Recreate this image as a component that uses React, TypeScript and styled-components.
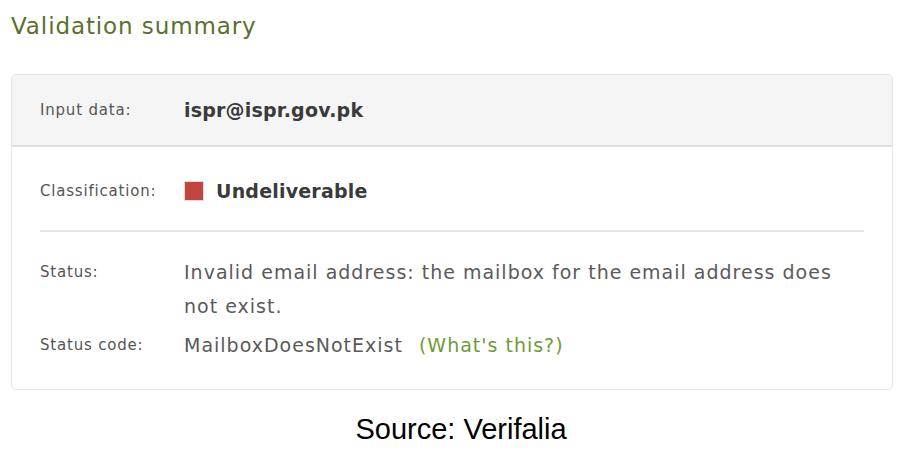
import React from "react";
import styled, { createGlobalStyle } from "styled-components";

const Global = createGlobalStyle`
  html, body { margin: 0; padding: 0; background: #ffffff; }
  body { font-family: "DejaVu Sans", "Inter", sans-serif; }
`;

const Page = styled.div`
  width: 906px;
  height: 470px;
  box-sizing: border-box;
  padding: 8px 13px 0 11px;
  display: flex;
  flex-direction: column;
`;

const Title = styled.h2`
  margin: 0;
  height: 66px;
  font-size: 23px;
  line-height: 37px;
  font-weight: 400;
  letter-spacing: 0.9px;
  color: #5b6f2e;
`;

const Card = styled.section`
  border: 1px solid #e4e4e4;
  border-radius: 5px;
  overflow: hidden;
  box-shadow: 0 0 2px rgba(0, 0, 0, 0.04);
`;

const Header = styled.div`
  background: #f5f5f5;
  height: 70px;
  border-bottom: 2px solid #dedede;
  padding: 0 28px;
  display: flex;
  align-items: center;
`;

const Body = styled.div`
  padding: 27px 28px 27px;
  display: flex;
  flex-direction: column;
`;

const Row = styled.div<{ $gapTop?: number }>`
  display: grid;
  grid-template-columns: 144px 1fr;
  align-items: start;
  margin-top: ${(p) => p.$gapTop ?? 0}px;
`;

const Label = styled.div`
  font-size: 15px;
  line-height: 34px;
  letter-spacing: 0.8px;
  color: #555555;
`;

const StrongValue = styled.div`
  font-size: 19px;
  line-height: 34px;
  font-weight: 700;
  letter-spacing: 0.2px;
  color: #3a3a3a;
  display: flex;
  align-items: center;
`;

const Value = styled.div`
  font-size: 19px;
  line-height: 34px;
  letter-spacing: 1px;
  color: #5a5a5a;
`;

const Swatch = styled.span<{ $color: string }>`
  width: 18px;
  height: 18px;
  background: ${(p) => p.$color};
  border: 1px solid #e8d8d6;
  margin: 0 12px 0 0;
  flex: none;
`;

const Divider = styled.hr`
  border: 0;
  height: 2px;
  background: #e6e6e6;
  margin: 22px 0 23px;
`;

const Link = styled.a`
  color: #6f9a38;
  margin-left: 16px;
  text-decoration: none;
`;

const Source = styled.div`
  margin-top: 21px;
  padding-left: 18px;
  text-align: center;
  font-family: "Liberation Sans", Arial, sans-serif;
  font-size: 29px;
  line-height: 36px;
  color: #000;
`;

export default function App() {
  return (
    <>
      <Global />
      <Page>
        <Title>Validation summary</Title>
        <Card>
          <Header>
            <Row>
              <Label>Input data:</Label>
              <StrongValue>ispr@ispr.gov.pk</StrongValue>
            </Row>
          </Header>
          <Body>
            <Row>
              <Label>Classification:</Label>
              <StrongValue>
                <Swatch $color="#c0443f" />
                Undeliverable
              </StrongValue>
            </Row>
            <Divider />
            <Row>
              <Label>Status:</Label>
              <Value>
                Invalid email address: the mailbox for the email address does
                not exist.
              </Value>
            </Row>
            <Row $gapTop={5}>
              <Label>Status code:</Label>
              <Value>
                MailboxDoesNotExist
                <Link>(What's this?)</Link>
              </Value>
            </Row>
          </Body>
        </Card>
        <Source>Source: Verifalia</Source>
      </Page>
    </>
  );
}
